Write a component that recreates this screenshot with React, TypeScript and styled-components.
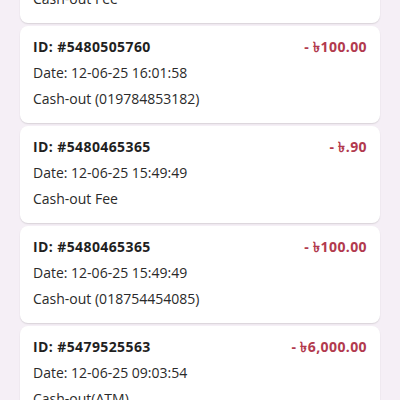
import React from "react";
import styled, { createGlobalStyle } from "styled-components";

const Global = createGlobalStyle`
  html, body { margin: 0; padding: 0; background: #f5eff6; }
  body { font-family: "Open Sans", "Noto Sans", "DejaVu Sans", sans-serif; overflow: hidden; }
`;

const List = styled.div`
  display: flex;
  flex-direction: column;
  gap: 3px;
  padding: 0 20px;
  margin-top: -74px;
`;

const Card = styled.div`
  background: #ffffff;
  border-radius: 8px;
  padding: 8px 13px 12px 13px;
  box-shadow: 0 1px 1.5px rgba(0, 0, 0, 0.12);
  height: 97px;
  box-sizing: border-box;
`;

const Row = styled.div`
  display: flex;
  justify-content: space-between;
  align-items: baseline;
  height: 26px;
  line-height: 26px;
`;

const Id = styled.span`
  font-size: 14px;
  font-weight: 700;
  color: #1f1f1f;
  letter-spacing: 0.4px;
`;

const Amount = styled.span`
  font-size: 14px;
  font-weight: 700;
  color: #b23a4e;
  letter-spacing: 0.4px;
`;

const Line = styled.div`
  font-size: 14px;
  color: #2a2a2a;
  height: 26px;
  line-height: 26px;
`;

const data = [
  { id: "5480505759", amount: "- ৳.90", date: "12-06-25 16:01:58", desc: "Cash-out Fee" },
  { id: "5480505760", amount: "- ৳100.00", date: "12-06-25 16:01:58", desc: "Cash-out (019784853182)" },
  { id: "5480465365", amount: "- ৳.90", date: "12-06-25 15:49:49", desc: "Cash-out Fee" },
  { id: "5480465365", amount: "- ৳100.00", date: "12-06-25 15:49:49", desc: "Cash-out (018754454085)" },
  { id: "5479525563", amount: "- ৳6,000.00", date: "12-06-25 09:03:54", desc: "Cash-out(ATM)" },
];

export default function App() {
  return (
    <>
      <Global />
      <List>
        {data.map((d, i) => (
          <Card key={i}>
            <Row>
              <Id>ID: #{d.id}</Id>
              <Amount>{d.amount}</Amount>
            </Row>
            <Line>Date: {d.date}</Line>
            <Line>{d.desc}</Line>
          </Card>
        ))}
      </List>
    </>
  );
}
